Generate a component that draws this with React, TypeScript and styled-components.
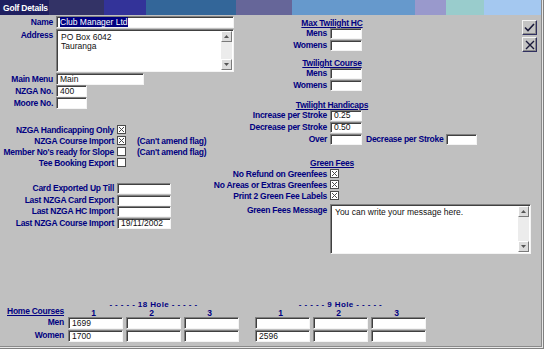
import * as React from "react";
import styled, { createGlobalStyle } from "styled-components";

const GlobalStyle = createGlobalStyle`
  html, body {
    margin: 0;
    padding: 0;
    background: #c0c0c0;
  }
  body {
    font-family: "Liberation Sans", Arial, sans-serif;
  }
`;

const NAVY = "#000080";

const Window = styled.div`
  width: 544px;
  height: 349px;
  box-sizing: border-box;
  padding: 0 3px 3px 0;
  background: #c0c0c0;
  display: flex;
  flex-direction: column;
  overflow: hidden;
  box-shadow: inset -1px -1px 0 #808080, inset -2px -2px 0 #e8e8e8,
    inset -3px -3px 0 #8a8a8a;
`;

const TitleBar = styled.div`
  flex: none;
  height: 15px;
  display: flex;
  align-items: center;
  background: linear-gradient(
    to right,
    #1f1f60 0 49px,
    #333366 49px 104px,
    #333399 104px 146px,
    #336699 146px 236px,
    #666699 236px 292px,
    #6699cc 292px 415px,
    #9999cc 415px 446px,
    #99cccc 446px 484px,
    #a4c8f0 484px
  );
`;

const Title = styled.span`
  color: #fff;
  font: bold 8.5px "Liberation Sans", Arial, sans-serif;
  letter-spacing: -0.2px;
  padding-left: 3px;
`;

const Main = styled.div`
  display: flex;
  flex: none;
`;

const LeftCol = styled.div`
  width: 212px;
  flex: none;
  display: flex;
  flex-direction: column;
  padding-top: 1px;
`;

const RightCol = styled.div`
  flex: 1;
  display: flex;
  flex-direction: column;
  padding-top: 3px;
`;

const Label = styled.span<{ $w?: number; $top?: boolean }>`
  ${(p) => (p.$w ? `width: ${p.$w}px;` : "")}
  flex: none;
  text-align: right;
  white-space: nowrap;
  color: ${NAVY};
  font: bold 8.5px "Liberation Sans", Arial, sans-serif;
  letter-spacing: -0.25px;
  line-height: 10px;
  ${(p) => (p.$top ? "align-self: start; padding-top: 2px;" : "")}
`;

const Field = styled.div<{ $w: number; $h?: number }>`
  box-sizing: border-box;
  flex: none;
  width: ${(p) => p.$w}px;
  height: ${(p) => p.$h ?? 12}px;
  background: #fff;
  border: 1px solid;
  border-color: #808080 #f4f4f4 #f4f4f4 #808080;
  box-shadow: inset 1px 1px 0 #404040;
  padding-left: 3px;
  font: 8.5px "Liberation Sans", Arial, sans-serif;
  line-height: ${(p) => (p.$h ?? 12) - 2}px;
  color: #111;
  white-space: nowrap;
  overflow: hidden;
`;

const Selected = styled.span`
  background: ${NAVY};
  color: #fff;
`;

/* top-left block: name / address / numbers */
const IdGrid = styled.div`
  display: grid;
  grid-template-columns: 53px auto;
  column-gap: 3px;
  align-items: center;
  justify-items: start;
  & > ${Label} {
    justify-self: end;
  }
`;

const ScrollBox = styled.div<{ $w: number; $h: number }>`
  box-sizing: border-box;
  width: ${(p) => p.$w}px;
  height: ${(p) => p.$h}px;
  display: flex;
  background: #fff;
  border: 1px solid;
  border-color: #808080 #f4f4f4 #f4f4f4 #808080;
  box-shadow: inset 1px 1px 0 #404040;
  padding: 1px 1px 1px 1px;
`;

const ScrollText = styled.div`
  flex: 1;
  padding: 2px 3px;
  font: 8.5px "Liberation Sans", Arial, sans-serif;
  line-height: 9px;
  color: #111;
  white-space: pre;
`;

const ScrollBar = styled.div`
  width: 11px;
  flex: none;
  display: flex;
  flex-direction: column;
  background: #ececec;
`;

const ScrollArrow = styled.div`
  box-sizing: border-box;
  height: 11px;
  flex: none;
  display: flex;
  align-items: center;
  justify-content: center;
  background: #dcdcdc;
  border: 1px solid;
  border-color: #fff #7a7a7a #7a7a7a #fff;
`;

const ScrollTrack = styled.div`
  flex: 1;
`;

const Arrow = ({ down }: { down?: boolean }) => (
  <svg width="5" height="3" viewBox="0 0 5 3">
    <path d={down ? "M0 0 H5 L2.5 3 Z" : "M0 3 H5 L2.5 0 Z"} fill="#555" />
  </svg>
);

const TextBox = ({ w, h, text }: { w: number; h: number; text: string }) => (
  <ScrollBox $w={w} $h={h}>
    <ScrollText>{text}</ScrollText>
    <ScrollBar>
      <ScrollArrow>
        <Arrow />
      </ScrollArrow>
      <ScrollTrack />
      <ScrollArrow>
        <Arrow down />
      </ScrollArrow>
    </ScrollBar>
  </ScrollBox>
);

const AddressWrap = styled.div`
  margin: 1px 0;
`;

/* checkbox rows */
const FlagList = styled.div<{ $gap: number }>`
  margin-top: ${(p) => p.$gap}px;
  display: flex;
  flex-direction: column;
`;

const FlagRow = styled.div`
  height: 11px;
  display: flex;
  align-items: center;
`;

const Note = styled.span`
  margin-left: 11px;
  color: ${NAVY};
  font: bold 8.5px "Liberation Sans", Arial, sans-serif;
  letter-spacing: -0.25px;
  white-space: nowrap;
`;

const Box = styled.span`
  box-sizing: border-box;
  flex: none;
  width: 9px;
  height: 9px;
  margin-left: 3px;
  background: #fff;
  border: 1px solid #4a4a4a;
  display: flex;
`;

const Check = ({ on }: { on?: boolean }) => (
  <Box>
    {on && (
      <svg width="7" height="7" viewBox="0 0 7 7">
        <path d="M1 1 L6 6 M6 1 L1 6" stroke="#4a4a4a" strokeWidth="1" />
      </svg>
    )}
  </Box>
);

const DateList = styled.div`
  margin-top: 15px;
  display: flex;
  flex-direction: column;
`;

const DateRow = styled.div`
  height: 11.6px;
  display: flex;
  align-items: flex-start;
  & > ${Label} {
    margin-right: 3px;
    line-height: 11px;
  }
`;

/* right side */
const TopRow = styled.div`
  display: flex;
  align-items: flex-start;
`;

const Group = styled.div<{ $gap?: number }>`
  display: flex;
  flex-direction: column;
  margin-top: ${(p) => p.$gap ?? 0}px;
`;

const Heading = styled.div`
  width: 240px;
  height: 10px;
  text-align: center;
  color: ${NAVY};
  font: bold 8.5px "Liberation Sans", Arial, sans-serif;
  letter-spacing: -0.25px;
  line-height: 10px;
  text-decoration: underline;
  text-underline-offset: 1px;
`;

const Row = styled.div<{ $h?: number }>`
  height: ${(p) => p.$h ?? 12}px;
  display: flex;
  align-items: flex-start;
  & > ${Label} {
    margin-right: 3px;
    line-height: 11px;
  }
`;

const CheckRowR = styled.div`
  height: 11px;
  display: flex;
  align-items: center;
`;

const Extra = styled(Label)`
  margin-left: 4px;
  margin-right: 4px;
`;

const MessageRow = styled.div`
  margin-top: 3px;
  display: flex;
  align-items: flex-start;
  & > ${Label} {
    margin-right: 3px;
    padding-top: 1px;
  }
`;

const Tools = styled.div`
  margin-left: auto;
  margin-top: 2px;
  margin-right: 4px;
  display: flex;
  flex-direction: column;
  gap: 2px;
`;

const ToolButton = styled.div`
  box-sizing: border-box;
  width: 15px;
  height: 15px;
  display: flex;
  align-items: center;
  justify-content: center;
  background: #c4c4c4;
  border: 1px solid;
  border-color: #f4f4f4 #303060 #303060 #f4f4f4;
  box-shadow: inset -1px -1px 0 #8a8a8a;
`;

/* bottom: home courses */
const Bottom = styled.div`
  margin-top: auto;
  display: flex;
  padding-bottom: 4px;
`;

const CourseLabels = styled.div`
  width: 64px;
  display: grid;
  grid-template-rows: 16px 13px 12px;
  justify-items: end;
`;

const HomeCourses = styled(Label)`
  align-self: center;
  padding-top: 4px;
  text-decoration: underline;
  text-underline-offset: 1px;
`;

const HoleGroup = styled.div<{ $left: number }>`
  margin-left: ${(p) => p.$left}px;
  display: grid;
  grid-template-columns: repeat(3, 55px);
  grid-template-rows: 8px 8px 13px 12px;
  column-gap: 3px;
`;

const HoleHeader = styled.div`
  grid-column: 1 / -1;
  text-align: center;
  color: ${NAVY};
  font: bold 8px "Liberation Sans", Arial, sans-serif;
  letter-spacing: 0.4px;
  line-height: 8px;
  white-space: nowrap;
`;

const ColNum = styled.div`
  text-align: center;
  padding-right: 4px;
  color: ${NAVY};
  font: bold 8.5px "Liberation Sans", Arial, sans-serif;
  line-height: 8px;
`;

const Holes = ({
  title,
  left,
  men,
  women,
}: {
  title: string;
  left: number;
  men: string[];
  women: string[];
}) => (
  <HoleGroup $left={left}>
    <HoleHeader>{title}</HoleHeader>
    <ColNum>1</ColNum>
    <ColNum>2</ColNum>
    <ColNum>3</ColNum>
    {men.map((v, i) => (
      <Field key={"m" + i} $w={55} $h={12}>
        {v}
      </Field>
    ))}
    {women.map((v, i) => (
      <Field key={"w" + i} $w={55} $h={12}>
        {v}
      </Field>
    ))}
  </HoleGroup>
);

export default function App() {
  return (
    <Window>
      <GlobalStyle />
      <TitleBar>
        <Title>Golf Details</Title>
      </TitleBar>
      <Main>
        <LeftCol>
          <IdGrid>
            <Label>Name</Label>
            <Field $w={178}>
              <Selected>Club Manager Ltd</Selected>
            </Field>
            <Label $top>Address</Label>
            <AddressWrap>
              <TextBox w={178} h={43} text={"PO Box 6042\nTauranga"} />
            </AddressWrap>
            <Label>Main Menu</Label>
            <Field $w={88}>Main</Field>
            <Label>NZGA No.</Label>
            <Field $w={31}>400</Field>
            <Label>Moore No.</Label>
            <Field $w={31} />
          </IdGrid>

          <FlagList $gap={15}>
            <FlagRow>
              <Label $w={114}>NZGA Handicapping Only</Label>
              <Check on />
            </FlagRow>
            <FlagRow>
              <Label $w={114}>NZGA Course Import</Label>
              <Check on />
              <Note>(Can't amend flag)</Note>
            </FlagRow>
            <FlagRow>
              <Label $w={114}>Member No's ready for Slope</Label>
              <Check />
              <Note>(Can't amend flag)</Note>
            </FlagRow>
            <FlagRow>
              <Label $w={114}>Tee Booking Export</Label>
              <Check />
            </FlagRow>
          </FlagList>

          <DateList>
            <DateRow>
              <Label $w={114}>Card Exported Up Till</Label>
              <Field $w={54} $h={11} />
            </DateRow>
            <DateRow>
              <Label $w={114}>Last NZGA Card Export</Label>
              <Field $w={54} $h={11} />
            </DateRow>
            <DateRow>
              <Label $w={114}>Last NZGA HC Import</Label>
              <Field $w={54} $h={11} />
            </DateRow>
            <DateRow>
              <Label $w={114}>Last NZGA Course Import</Label>
              <Field $w={54} $h={11}>
                19/11/2002
              </Field>
            </DateRow>
          </DateList>
        </LeftCol>

        <RightCol>
          <TopRow>
            <Group>
              <Heading>Max Twilight HC</Heading>
              <Row>
                <Label $w={115}>Mens</Label>
                <Field $w={32} $h={11} />
              </Row>
              <Row>
                <Label $w={115}>Womens</Label>
                <Field $w={32} $h={11} />
              </Row>
            </Group>
            <Tools>
              <ToolButton>
                <svg width="11" height="9" viewBox="0 0 11 9">
                  <path
                    d="M1 4.5 L4 7.5 L10 1"
                    fill="none"
                    stroke="#1a1a3a"
                    strokeWidth="1.6"
                  />
                </svg>
              </ToolButton>
              <ToolButton>
                <svg width="10" height="10" viewBox="0 0 10 10">
                  <path
                    d="M1 1 L9 9 M9 1 L1 9"
                    fill="none"
                    stroke="#1a1a3a"
                    strokeWidth="1.4"
                  />
                </svg>
              </ToolButton>
            </Tools>
          </TopRow>

          <Group $gap={6}>
            <Heading>Twilight Course</Heading>
            <Row>
              <Label $w={115}>Mens</Label>
              <Field $w={32} $h={11} />
            </Row>
            <Row>
              <Label $w={115}>Womens</Label>
              <Field $w={32} $h={11} />
            </Row>
          </Group>

          <Group $gap={8}>
            <Heading>Twilight Handicaps</Heading>
            <Row>
              <Label $w={115}>Increase per Stroke</Label>
              <Field $w={32} $h={11}>
                0.25
              </Field>
            </Row>
            <Row>
              <Label $w={115}>Decrease per Stroke</Label>
              <Field $w={32} $h={11}>
                0.50
              </Field>
            </Row>
            <Row>
              <Label $w={115}>Over</Label>
              <Field $w={32} $h={11} />
              <Extra>Decrease per Stroke</Extra>
              <Field $w={31} $h={11} />
            </Row>
          </Group>

          <Group $gap={12}>
            <Heading>Green Fees</Heading>
            <CheckRowR>
              <Label $w={115}>No Refund on Greenfees</Label>
              <Check on />
            </CheckRowR>
            <CheckRowR>
              <Label $w={115}>No Areas or Extras Greenfees</Label>
              <Check on />
            </CheckRowR>
            <CheckRowR>
              <Label $w={115}>Print 2 Green Fee Labels</Label>
              <Check on />
            </CheckRowR>
            <MessageRow>
              <Label $w={115}>Green Fees Message</Label>
              <TextBox w={201} h={50} text="You can write your message here." />
            </MessageRow>
          </Group>
        </RightCol>
      </Main>

      <Bottom>
        <CourseLabels>
          <HomeCourses>Home Courses</HomeCourses>
          <Label>Men</Label>
          <Label>Women</Label>
        </CourseLabels>
        <Holes
          title="- - - - - 18 Hole - - - - -"
          left={4}
          men={["1699", "", ""]}
          women={["1700", "", ""]}
        />
        <Holes
          title="- - - - - 9 Hole - - - - -"
          left={16}
          men={["", "", ""]}
          women={["2596", "", ""]}
        />
      </Bottom>
    </Window>
  );
}
